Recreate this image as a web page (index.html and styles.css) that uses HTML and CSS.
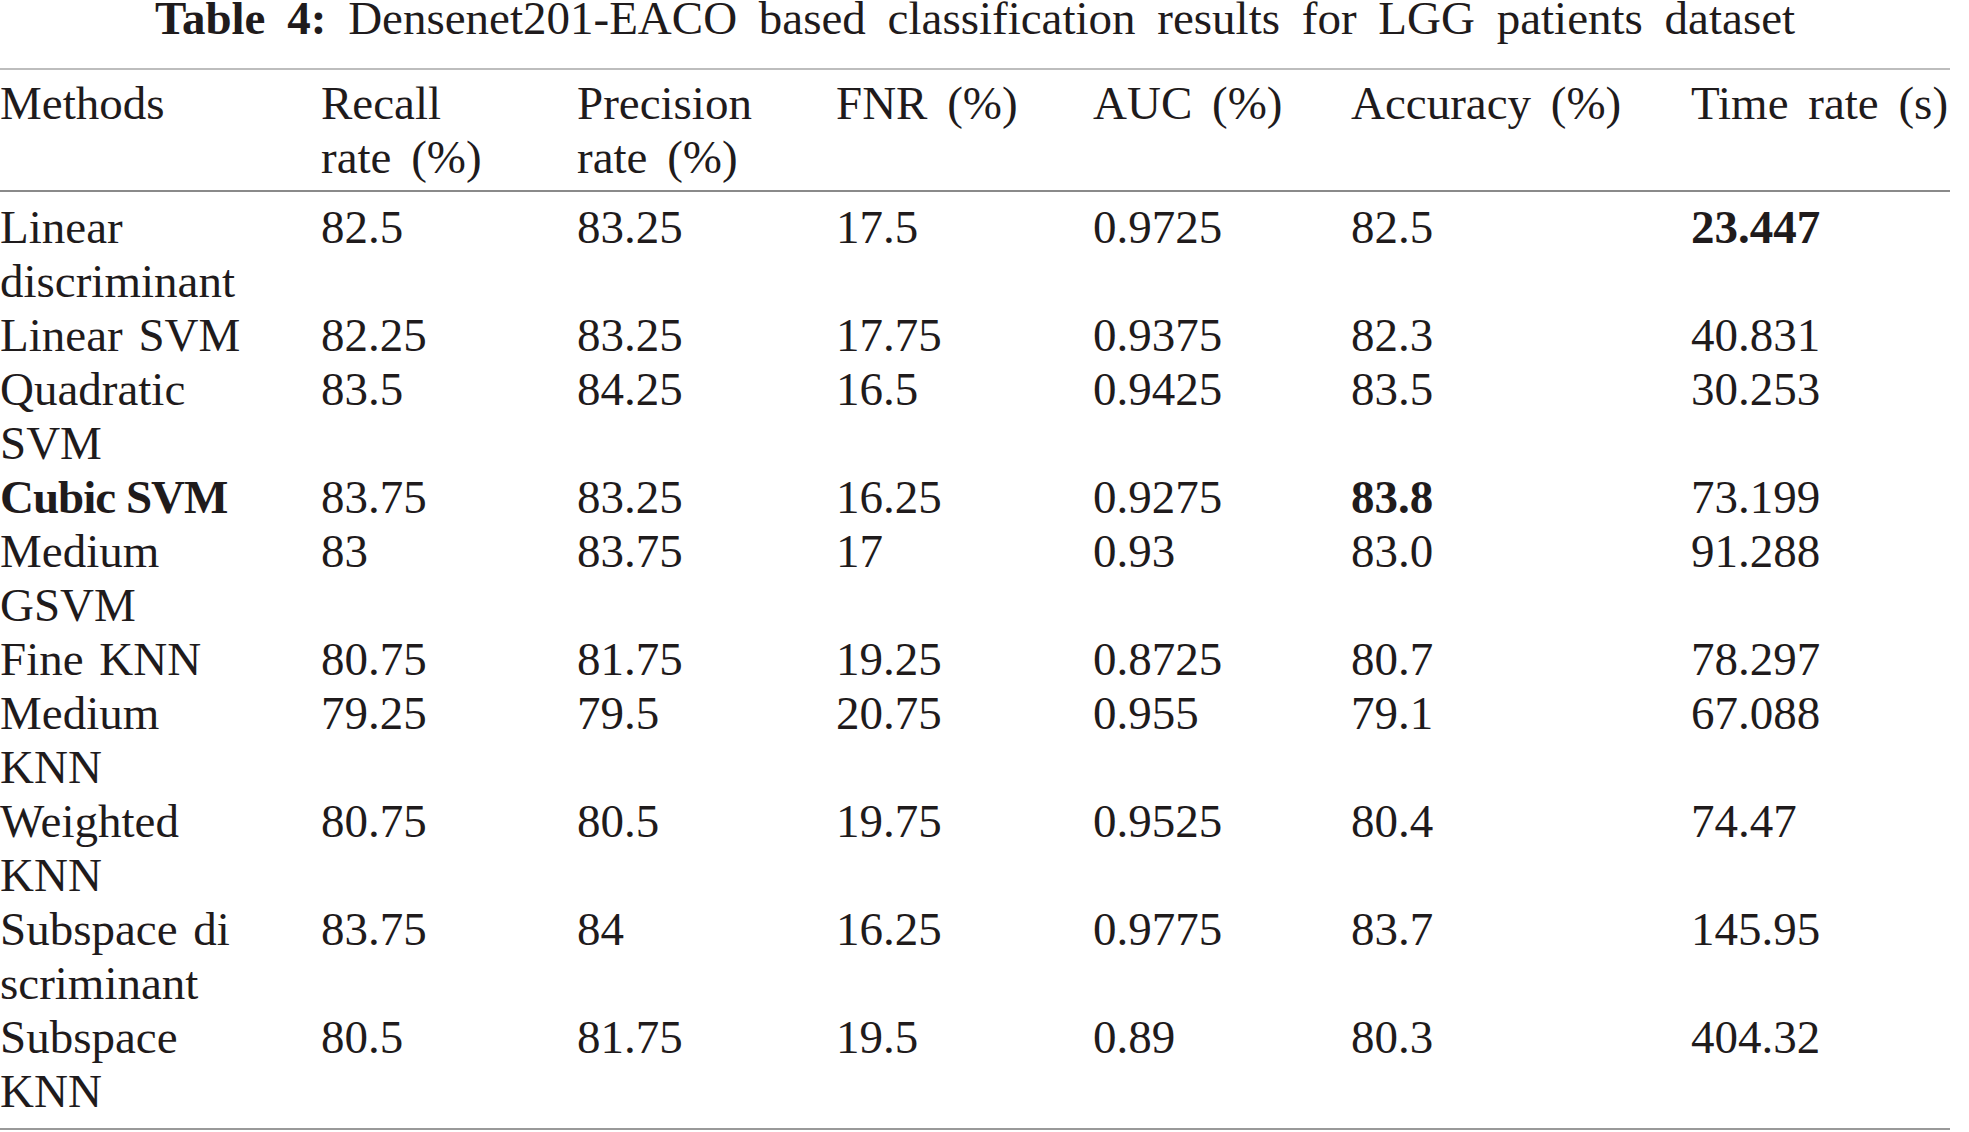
FILE: index.html
```html
<!DOCTYPE html>
<html>
<head>
<meta charset="utf-8">
<link rel="stylesheet" href="styles.css">
</head>
<body>
<div class="page">
  <p class="caption"><b>Table 4:</b> Densenet201-EACO based classification results for LGG patients dataset</p>
  <table class="results">
    <colgroup>
      <col class="c-method"><col class="c-recall"><col class="c-prec"><col class="c-fnr"><col class="c-auc"><col class="c-acc"><col class="c-time">
    </colgroup>
    <thead>
      <tr>
        <th>Methods</th>
        <th>Recall<br>rate (%)</th>
        <th>Precision<br>rate (%)</th>
        <th>FNR (%)</th>
        <th>AUC (%)</th>
        <th>Accuracy (%)</th>
        <th>Time rate (s)</th>
      </tr>
    </thead>
    <tbody>
      <tr class="first"><td>Linear<br>discriminant</td><td>82.5</td><td>83.25</td><td>17.5</td><td>0.9725</td><td>82.5</td><td><b>23.447</b></td></tr>
      <tr><td>Linear SVM</td><td>82.25</td><td>83.25</td><td>17.75</td><td>0.9375</td><td>82.3</td><td>40.831</td></tr>
      <tr><td>Quadratic<br>SVM</td><td>83.5</td><td>84.25</td><td>16.5</td><td>0.9425</td><td>83.5</td><td>30.253</td></tr>
      <tr><td><b class="tight">Cubic SVM</b></td><td>83.75</td><td>83.25</td><td>16.25</td><td>0.9275</td><td><b>83.8</b></td><td>73.199</td></tr>
      <tr><td>Medium<br>GSVM</td><td>83</td><td>83.75</td><td>17</td><td>0.93</td><td>83.0</td><td>91.288</td></tr>
      <tr><td>Fine KNN</td><td>80.75</td><td>81.75</td><td>19.25</td><td>0.8725</td><td>80.7</td><td>78.297</td></tr>
      <tr><td>Medium<br>KNN</td><td>79.25</td><td>79.5</td><td>20.75</td><td>0.955</td><td>79.1</td><td>67.088</td></tr>
      <tr><td>Weighted<br>KNN</td><td>80.75</td><td>80.5</td><td>19.75</td><td>0.9525</td><td>80.4</td><td>74.47</td></tr>
      <tr><td>Subspace di<br>scriminant</td><td>83.75</td><td>84</td><td>16.25</td><td>0.9775</td><td>83.7</td><td>145.95</td></tr>
      <tr class="last"><td>Subspace<br>KNN</td><td>80.5</td><td>81.75</td><td>19.5</td><td>0.89</td><td>80.3</td><td>404.32</td></tr>
    </tbody>
  </table>
</div>
</body>
</html>
```
FILE: styles.css
```css
html, body {
  margin: 0;
  padding: 0;
  background: #ffffff;
}

body {
  font-family: "Liberation Serif", "Times New Roman", serif;
  color: #1f1b1c;
}

.page {
  width: 1950px;
}

.caption {
  margin: 0 0 32px 0;
  font-size: 47px;
  line-height: 36px;
  text-align: center;
  word-spacing: 10px;
  white-space: nowrap;
}

.caption b {
  font-weight: bold;
}

.results {
  width: 1950px;
  border-collapse: collapse;
  table-layout: fixed;
  font-size: 47px;
  line-height: 54px;
}

.c-method { width: 321px; }
.c-recall { width: 256px; }
.c-prec { width: 259px; }
.c-fnr { width: 257px; }
.c-auc { width: 258px; }
.c-acc { width: 340px; }
.c-time { width: 259px; }

.results th,
.results td {
  padding: 0;
  text-align: left;
  vertical-align: top;
  white-space: nowrap;
  font-weight: normal;
}

.results th {
  word-spacing: 8px;
}

.results td {
  word-spacing: 4px;
}

.results thead tr {
  border-top: 2px solid #bdbdbd;
  border-bottom: 2px solid #8a8a8a;
}

.results thead th {
  padding-top: 6px;
  padding-bottom: 6px;
}

.results tr.first td {
  padding-top: 8px;
}

.results tr.last td {
  padding-bottom: 10px;
}

.results tbody tr.last {
  border-bottom: 2px solid #999999;
}

.results b {
  font-weight: bold;
}

.results b.tight {
  word-spacing: 0;
  letter-spacing: -1px;
}
```
